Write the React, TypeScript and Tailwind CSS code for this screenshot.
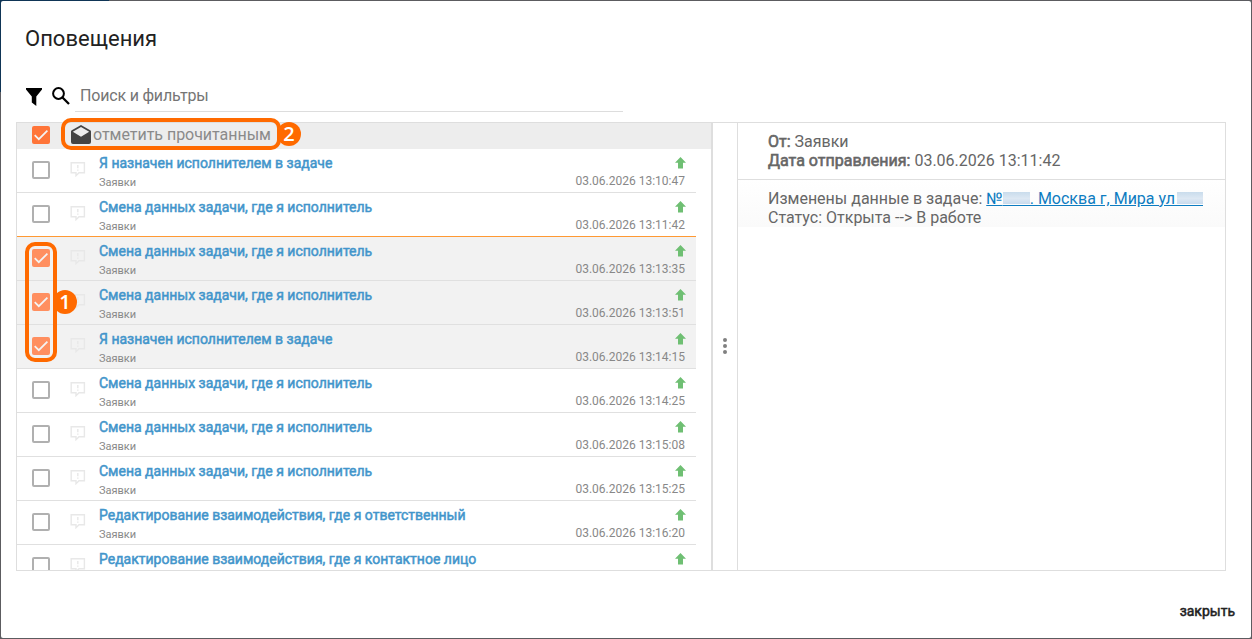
import React, { useState } from "react";
import { clsx } from "clsx";

interface Notification {
  id: number;
  title: string;
  source?: string;
  date?: string;
  checked?: boolean;
}

const ASSIGNED = "Я назначен исполнителем в задаче";
const CHANGED = "Смена данных задачи, где я исполнитель";

const initialItems: Notification[] = [
  { id: 1, title: ASSIGNED, source: "Заявки", date: "03.06.2026 13:10:47" },
  { id: 2, title: CHANGED, source: "Заявки", date: "03.06.2026 13:11:42" },
  { id: 3, title: CHANGED, source: "Заявки", date: "03.06.2026 13:13:35", checked: true },
  { id: 4, title: CHANGED, source: "Заявки", date: "03.06.2026 13:13:51", checked: true },
  { id: 5, title: ASSIGNED, source: "Заявки", date: "03.06.2026 13:14:15", checked: true },
  { id: 6, title: CHANGED, source: "Заявки", date: "03.06.2026 13:14:25" },
  { id: 7, title: CHANGED, source: "Заявки", date: "03.06.2026 13:15:08" },
  { id: 8, title: CHANGED, source: "Заявки", date: "03.06.2026 13:15:25" },
  { id: 9, title: "Редактирование взаимодействия, где я ответственный", source: "Заявки", date: "03.06.2026 13:16:20" },
  { id: 10, title: "Редактирование взаимодействия, где я контактное лицо" },
];

const SELECTED_ID = 2;

const Checkbox = ({ checked, soft, onClick }: { checked?: boolean; soft?: boolean; onClick?: () => void }) => (
  <button
    type="button"
    role="checkbox"
    aria-checked={!!checked}
    onClick={onClick}
    className={clsx(
      "block size-[18px] shrink-0 rounded-[2px]",
      checked ? (soft ? "bg-[#ff8f60]" : "bg-[#ff7539]") : "border-2 border-[#b0b0b0] bg-white"
    )}
  >
    {checked && (
      <svg viewBox="0 0 18 18" className="size-[18px]" fill="none" stroke="#f4f4f4" strokeWidth="1.7">
        <path d="M2.700 9.200 6.800 13.200 15.400 4.600" />
      </svg>
    )}
  </button>
);

const MessageIcon = () => (
  <svg viewBox="0 0 16 16" className="size-4 shrink-0" fill="none" stroke="#e8e8e8" strokeWidth="1.4">
    <path d="M1.200 1.700h13.200v10H9L6 14.700v-3H1.200z" />
    <path d="M7.800 4v3.200M7.800 8.400v1.400" />
  </svg>
);

const ArrowUpIcon = () => (
  <svg viewBox="0 0 12 12" className="size-3" fill="#6fbf73">
    <path d="M6.500 0 12 5.700H9V11.500H4V5.700H1z" />
  </svg>
);

const StepBadge = ({ n, className }: { n: number; className: string }) => (
  <span
    className={clsx(
      "absolute z-20 flex size-6 items-center justify-center rounded-full bg-[#ff6a00] font-['Open_Sans',sans-serif] text-[20px] leading-none font-semibold text-white",
      className
    )}
  >
    {n}
  </span>
);

interface RowProps {
  item: Notification;
  onToggle: () => void;
}

const NotificationRow: React.FC<RowProps> = ({ item, onToggle }) => (
  <div
    className={clsx(
      "flex h-11 w-[679px] shrink-0 border-b pl-[15px]",
      item.checked ? "bg-[#f2f2f2]" : "bg-white",
      item.id === SELECTED_ID ? "border-b-[#ff9933]" : "border-b-[#e0e0e0]"
    )}
  >
    <div className="pt-3">
      <Checkbox checked={item.checked} soft onClick={onToggle} />
    </div>
    <div className="ml-5 pt-3">
      <MessageIcon />
    </div>
    <div className="ml-[13px] flex-1">
      <div className="pt-[5px] text-[14px] leading-[18px] whitespace-nowrap text-[#4295cb] [-webkit-text-stroke:0.5px_#4295cb]">
        {item.title}
      </div>
      {item.source && <div className="pt-1 text-[11px] leading-[14px] text-[#888]">{item.source}</div>}
    </div>
    <div className="flex flex-col items-end pr-[10px]">
      <div className="h-6 pt-2">
        <ArrowUpIcon />
      </div>
      {item.date && <span className="mr-px text-[12px] leading-4 text-[#888]">{item.date}</span>}
    </div>
  </div>
);

/* Hidden part of the link text */
const Redacted = ({ className }: { className: string }) => (
  <span
    className={clsx(
      "inline-block h-[14px] border-b border-[#0d7cc1] bg-linear-to-b from-[#c9dcec] via-[#dde8f3] to-[#c6d8ec] bg-clip-content pb-px align-[-2px]",
      className
    )}
  />
);

const App: React.FC = () => {
  const [items, setItems] = useState(initialItems);

  const toggle = (id: number) =>
    setItems((prev) => prev.map((i) => (i.id === id ? { ...i, checked: !i.checked } : i)));

  return (
    <div className="relative h-[639px] w-[1252px] overflow-hidden bg-[#5c5c60] p-px font-[Roboto,sans-serif]">
      {/* Page header showing behind the dialog */}
      <div className="absolute top-0 left-0 h-[92px] w-[109px] bg-[#0f3556]" />

      <div className="relative flex h-[637px] w-[1250px] flex-col rounded-[2px] bg-white">
        <h1 className="pt-6 pl-6 text-[22px] leading-7 text-[#222]">Оповещения</h1>

        {/* Search */}
        <div className="mt-[27px] flex h-8 items-center pl-[25px]">
          <svg viewBox="0 0 16 18" className="mt-px h-[18px] w-4" fill="#000">
            <path d="M0 0h16v1.500L10.300 8.500V18L5.800 14.500V8.500L0 1.500z" />
          </svg>
          <svg viewBox="0 0 18 18" className="ml-[10px] size-[18px]" fill="none" stroke="#000" strokeWidth="2">
            <circle cx="6.500" cy="6.500" r="5.400" />
            <path d="M10.500 10.500 17 17" strokeWidth="2.300" />
          </svg>
          <div className="ml-[5px] h-8 w-[548px] border-b border-[#ddd] pl-[5px] text-[16px] leading-8 tracking-[-0.19px] text-[#757575]">
            Поиск и фильтры
          </div>
        </div>

        {/* Main area */}
        <div className="mt-[10px] ml-[15px] flex h-[449px] w-[1210px] border border-[#dedede]">
          <div className="flex w-[696px] flex-col overflow-hidden border-r-2 border-[#dedede]">
            <div className="flex h-[26px] shrink-0 items-center bg-[#ededed] pb-[2px] pl-[15px]">
              <Checkbox checked />
              <svg viewBox="0 0 20 19" className="mb-[2px] ml-[21px] h-[19px] w-5" fill="#444">
                <path
                  fillRule="evenodd"
                  d="M10 0 19.200 5.200Q20 5.700 20 6.500V17Q20 19 18 19H2Q0 19 0 17V6.500Q0 5.700.8 5.200zM10 2 1.800 6.700 10 11.800 18.200 6.700z"
                />
              </svg>
              <span className="ml-[2px] text-[16px] leading-6 tracking-[-0.03px] text-[#8a8a8a]">
                отметить прочитанным
              </span>
            </div>
            {items.map((item) => (
              <NotificationRow key={item.id} item={item} onToggle={() => toggle(item.id)} />
            ))}
          </div>

          {/* Splitter */}
          <div className="flex w-[25px] flex-col items-center justify-center gap-[2px] border-r border-[#dedede] pb-[2px]">
            <span className="size-1 rounded-full bg-[#808080]" />
            <span className="size-1 rounded-full bg-[#808080]" />
            <span className="size-1 rounded-full bg-[#808080]" />
          </div>

          <div className="flex-1 text-[16px] leading-[19px] whitespace-nowrap text-[#666]">
            <div className="h-[57px] border-b border-[#dedede] pt-[9px] pl-[30px]">
              <p>
                <span className="[-webkit-text-stroke:0.6px_#666]">От:</span> Заявки
              </p>
              <p>
                <span className="[-webkit-text-stroke:0.6px_#666]">Дата отправления:</span> 03.06.2026 13:11:42
              </p>
            </div>
            <div className="h-[47px] bg-linear-to-b from-white to-[#fafafa] pt-[9px] pl-[30px]">
              <p>
                Изменены данные в задаче:{" "}
                <a href="#" className="text-[#0d7cc1] underline">
                  №<Redacted className="w-[27px]" />. Москва г, Мира ул<Redacted className="w-[28px] pl-[2px]" />
                </a>
              </p>
              <p>Статус: Открыта --&gt; В работе</p>
            </div>
          </div>
        </div>

        <button
          type="button"
          className="mt-[30px] mr-4 self-end text-[14px] leading-5 text-[#222] [-webkit-text-stroke:0.5px_#222]"
        >
          закрыть
        </button>
      </div>

      {/* Step markers */}
      <div className="absolute top-[118px] left-[61px] z-10 h-8 w-[220px] rounded-[10px] border-4 border-[#ff6a00]" />
      <StepBadge n={2} className="top-[122px] left-[277px]" />
      <div className="absolute top-[242px] left-[25px] z-10 h-[120px] w-8 rounded-[10px] border-4 border-[#ff6a00]" />
      <StepBadge n={1} className="top-[290px] left-[53px]" />
    </div>
  );
};

export default App;
